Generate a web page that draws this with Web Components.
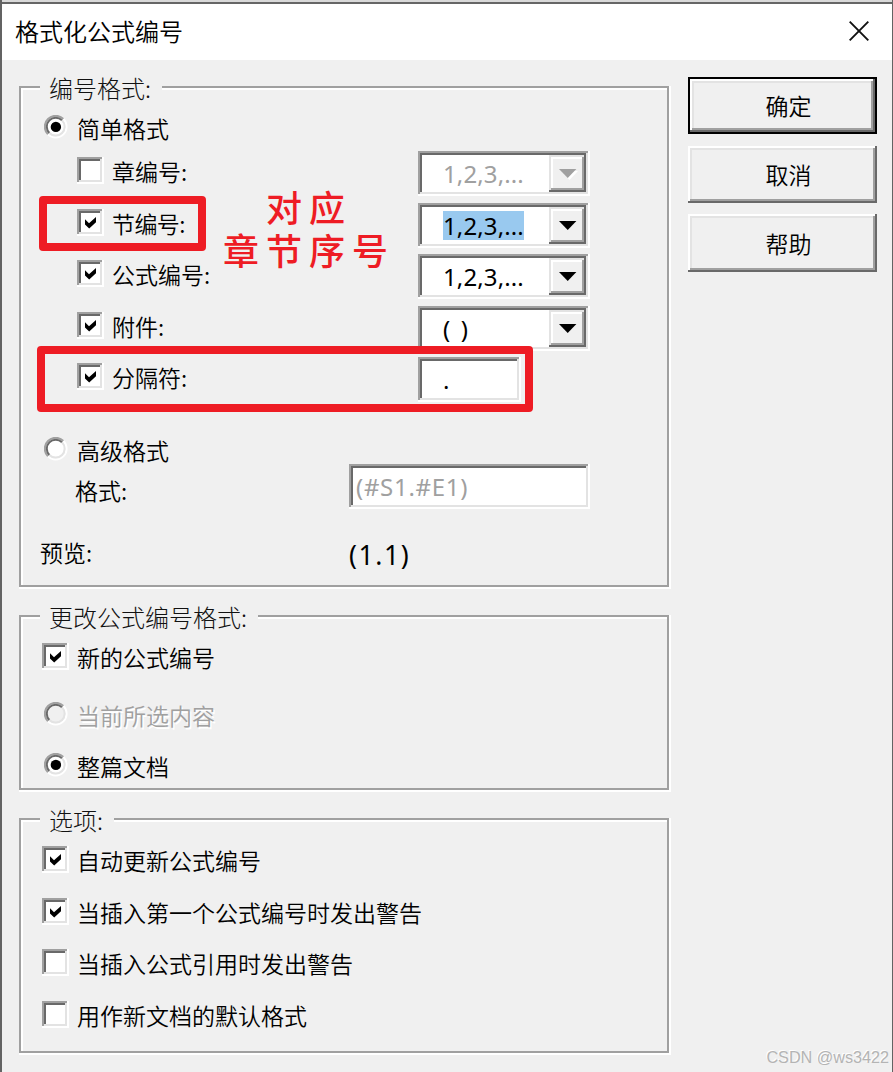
<!DOCTYPE html>
<html lang="zh-CN">
<head>
<meta charset="utf-8">
<title>格式化公式编号</title>
<style>
html,body{margin:0;padding:0;height:100%;overflow:hidden;background:#f0f0f0}
body{font-family:"Noto Sans CJK SC",sans-serif;font-size:23px;font-weight:350;color:#000}
</style>
</head>
<body>
<format-dialog caption="格式化公式编号">
  <group-box legend="编号格式:" style="height:501px">
    <check-option type="radio" checked style="margin:13px 0 0 21px">简单格式</check-option>
    <field-row style="margin-top:12px"><check-option>章编号:</check-option><combo-box slot="field" disabled>1,2,3,...</combo-box></field-row>
    <field-row style="margin-top:7px"><check-option checked style="letter-spacing:-.6px">节编号:</check-option><combo-box slot="field" selected>1,2,3,...</combo-box></field-row>
    <field-row style="margin-top:6px"><check-option checked>公式编号:</check-option><combo-box slot="field">1,2,3,...</combo-box></field-row>
    <field-row style="margin-top:7px"><check-option checked>附件:</check-option><combo-box slot="field" style="--track:2.2px">( )</combo-box></field-row>
    <field-row style="margin-top:6px"><check-option checked>分隔符:</check-option><edit-field slot="field" style="width:103px;--indent:25px">.</edit-field></field-row>
    <check-option type="radio" style="margin:35px 0 0 21px">高级格式</check-option>
    <field-row plain style="margin-top:3px;--start:54px;--label:274px"><text-label>格式:</text-label><edit-field slot="field" disabled style="width:241px;--indent:7px;letter-spacing:.7px">(#S1.#E1)</edit-field></field-row>
    <field-row plain style="margin-top:20px;--start:19px;--label:308px"><text-label style="--dy:3px">预览:</text-label><preview-value slot="field">(1.1)</preview-value></field-row>
  </group-box>
  <group-box legend="更改公式编号格式:" style="height:175px">
    <check-option checked style="margin:12px 0 0 21px">新的公式编号</check-option>
    <check-option type="radio" disabled style="margin:32px 0 0 21px">当前所选内容</check-option>
    <check-option type="radio" checked style="margin:27px 0 0 21px">整篇文档</check-option>
  </group-box>
  <group-box legend="选项:" style="height:235px">
    <check-option checked style="margin:12px 0 0 21px">自动更新公式编号</check-option>
    <check-option checked style="margin:25px 0 0 21px">当插入第一个公式编号时发出警告</check-option>
    <check-option style="margin:24px 0 0 21px">当插入公式引用时发出警告</check-option>
    <check-option style="margin:25px 0 0 21px">用作新文档的默认格式</check-option>
  </group-box>
  <push-button slot="actions" primary>确定</push-button>
  <push-button slot="actions" style="margin-top:12px">取消</push-button>
  <push-button slot="actions" style="margin-top:11px;height:58px">帮助</push-button>
  <mark-frame slot="overlay" style="left:39px;top:196px;width:167px;height:55px"></mark-frame>
  <mark-frame slot="overlay" style="left:37px;top:346px;width:496px;height:66px"></mark-frame>
  <mark-note slot="overlay" style="left:223px;top:185px"></mark-note>
  <water-mark slot="overlay">CSDN @ws3422</water-mark>
</format-dialog>
<script>
const define = (name, render) => customElements.define(name, class extends HTMLElement {
  constructor() { super(); this.attachShadow({ mode: 'open' }); }
  connectedCallback() { this.shadowRoot.innerHTML = render(this); }
});

define('format-dialog', el => `
<style>
:host{display:block;box-sizing:border-box;position:relative;width:893px;height:1072px;background:#f0f0f0;border:solid #636363;border-width:0 1px 0 2px;overflow:hidden}
.top{height:2px;margin-left:-2px;background:#d9d9d9;border-bottom:2px solid #666}
header{height:56px;background:#fff;display:flex;align-items:center;justify-content:space-between;padding:0 23px 0 13px}
h1{font:350 24px/54px "Noto Sans CJK SC",sans-serif;margin:-2px 0 0}
header svg{display:block;margin-top:-2px}
main{display:grid;grid-template-columns:650px 189px;column-gap:19px;padding-left:17px}
.groups{display:flex;flex-direction:column;gap:28px;padding-top:26px}
.actions{display:flex;flex-direction:column;padding-top:17px}
</style>
<div class="top"></div>
<header><h1>${el.getAttribute('caption')}</h1>
<svg width="20" height="20" viewBox="0 0 20 20"><path d="M.7.7 19.3 19.3M19.3.7.7 19.3" stroke="#111" stroke-width="1.9" fill="none"/></svg></header>
<main><div class="groups"><slot></slot></div><div class="actions"><slot name="actions"></slot></div></main>
<slot name="overlay"></slot>`);

define('group-box', el => `
<style>
:host{display:flex;flex-direction:column;align-items:flex-start;box-sizing:border-box;width:650px;border:2px solid #a0a0a0;box-shadow:2px 2px #fff,0 2px #fff,2px 0 #fff,inset 2px 2px #fff}
.legend{flex:none;height:26px;line-height:24px;margin:-12px 0 0 19px;padding:0 11px 0 9px;background:#f0f0f0;font-size:24px;font-weight:300;color:#111;white-space:nowrap}
</style><div class="legend">${el.getAttribute('legend')}</div><slot></slot>`);

define('field-row', el => `
<style>
:host{display:grid;flex:none;grid-template-columns:var(--label,341px) auto;margin-left:var(--start,56px);height:45px;align-items:start}
.label{padding-top:${el.hasAttribute('plain') ? 0 : 6}px}
</style><div class="label"><slot></slot></div><slot name="field"></slot>`);

define('text-label', () => `
<style>:host{display:block;line-height:32px;margin-top:calc(10px - var(--dy,0px));white-space:nowrap}</style><slot></slot>`);

define('preview-value', () => `
<style>:host{display:block;font:26.5px/32px "Noto Sans",sans-serif;letter-spacing:1.6px;padding:10px 0 0 1px;white-space:nowrap}</style><slot></slot>`);

define('check-option', el => {
  const radio = el.getAttribute('type') === 'radio', off = el.hasAttribute('disabled'), on = el.hasAttribute('checked');
  const mark = radio
    ? `<svg width="24" height="24" viewBox="0 0 24 24" fill="none" stroke-width="2">
<circle cx="11.7" cy="11.7" r="9.5" fill="${off ? '#f0f0f0' : '#fff'}"/>
<path d="M4 19.4A10.8 10.8 0 0 1 19.4 4" stroke="#a0a0a0"/><path d="M4 19.4A10.8 10.8 0 0 0 19.4 4" stroke="#fff"/>
<path d="M5.4 18A8.9 8.9 0 0 1 18 5.4" stroke="#696969"/><path d="M5.4 18A8.9 8.9 0 0 0 18 5.4" stroke="#e3e3e3"/>
${on ? '<circle cx="11.9" cy="11.9" r="5.2" fill="#000"/>' : ''}</svg>`
    : `<span class="box">${on ? '<svg width="27" height="27" viewBox="0 0 27 27"><path d="M8 10.3 12 14.3 19 8V13.2L12.2 19.4 8 15.6Z"/></svg>' : ''}</span>`;
  return `
<style>
:host{display:flex;flex:none;height:${radio ? 24 : 27}px;white-space:nowrap}
.mark{flex:none;width:35px;box-sizing:border-box;padding-left:${radio ? 2 : 0}px}
svg{display:block}
.box{display:block;width:27px;height:27px;background:#fff;box-shadow:inset -2px -2px #fff,inset 2px 2px #a0a0a0,inset -4px -4px #e3e3e3,inset 4px 4px #696969}
.text{line-height:32px;margin-top:${radio ? -3 : -2}px;${off ? 'color:#a0a0a0;text-shadow:1.5px 1.5px #fff' : ''}}
</style><span class="mark">${mark}</span><span class="text"><slot></slot></span>`;
});

const sunken = 'box-shadow:inset -2px -2px #fff,inset 2px 2px #a0a0a0,inset -4px -4px #e3e3e3,inset 4px 4px #696969;background:#fff;box-sizing:border-box;height:45px;font-family:"Noto Sans",sans-serif;font-weight:400;font-size:24px;white-space:nowrap;';

define('combo-box', el => {
  const off = el.hasAttribute('disabled');
  return `
<style>
:host{display:flex;justify-content:space-between;width:172px;padding:4px 4px 4px 25px;${sunken}}
.value{height:29px;line-height:29px;margin-top:4px;letter-spacing:var(--track,.12px);${off ? 'color:#a0a0a0;' : ''}${el.hasAttribute('selected') ? 'background:#99c9ef;' : ''}}
.drop{width:37px;height:37px;background:#f0f0f0;box-shadow:inset -2px -2px #696969,inset 2px 2px #e3e3e3,inset -4px -4px #a0a0a0,inset 4px 4px #fff}
svg{display:block}
</style>
<span class="value"><slot></slot></span>
<span class="drop"><svg width="37" height="37" viewBox="0 0 37 37">${off ? '<path d="M12 16H29L20.5 25Z" fill="#fff"/>' : ''}<path d="M10 14H27.4L18.7 23Z" fill="${off ? '#a0a0a0' : '#000'}"/></svg></span>`;
});

define('edit-field', el => `
<style>:host{display:block;padding:8px 4px 8px var(--indent);line-height:29px;${sunken}${el.hasAttribute('disabled') ? 'color:#a0a0a0;' : ''}}</style><slot></slot>`);

define('push-button', el => {
  const d = el.hasAttribute('primary');
  return `
<style>:host{display:flex;flex:none;align-items:center;justify-content:center;box-sizing:border-box;width:189px;height:57px;padding:0 0 1px 12px;line-height:34px;${d ? 'border:2px solid #000;' : ''}box-shadow:inset -2px -2px #696969,inset 2px 2px #fff,inset -4px -4px #a0a0a0,inset 4px 4px #e3e3e3}</style><slot></slot>`;
});

define('mark-frame', () => `
<style>:host{position:absolute;box-sizing:border-box;margin-left:-2px;border:8px solid #ee1c24;border-radius:4px}</style>`);

define('mark-note', () => `
<style>:host{position:absolute;display:block;margin-left:-2px;width:172px;text-align:center;color:#ee1c24;font:500 36px/43px KaiTi,STKaiti,"Noto Sans CJK SC",sans-serif;letter-spacing:7px;white-space:nowrap}</style>
<div>对应<br>章节序号</div>`);

define('water-mark', () => `
<style>:host{position:absolute;right:3px;bottom:4px;font:16.2px/22px "Liberation Sans",sans-serif;color:#b4b4b4;text-shadow:-1px -1px #fff;white-space:nowrap}</style><slot></slot>`);
</script>
</body>
</html>
